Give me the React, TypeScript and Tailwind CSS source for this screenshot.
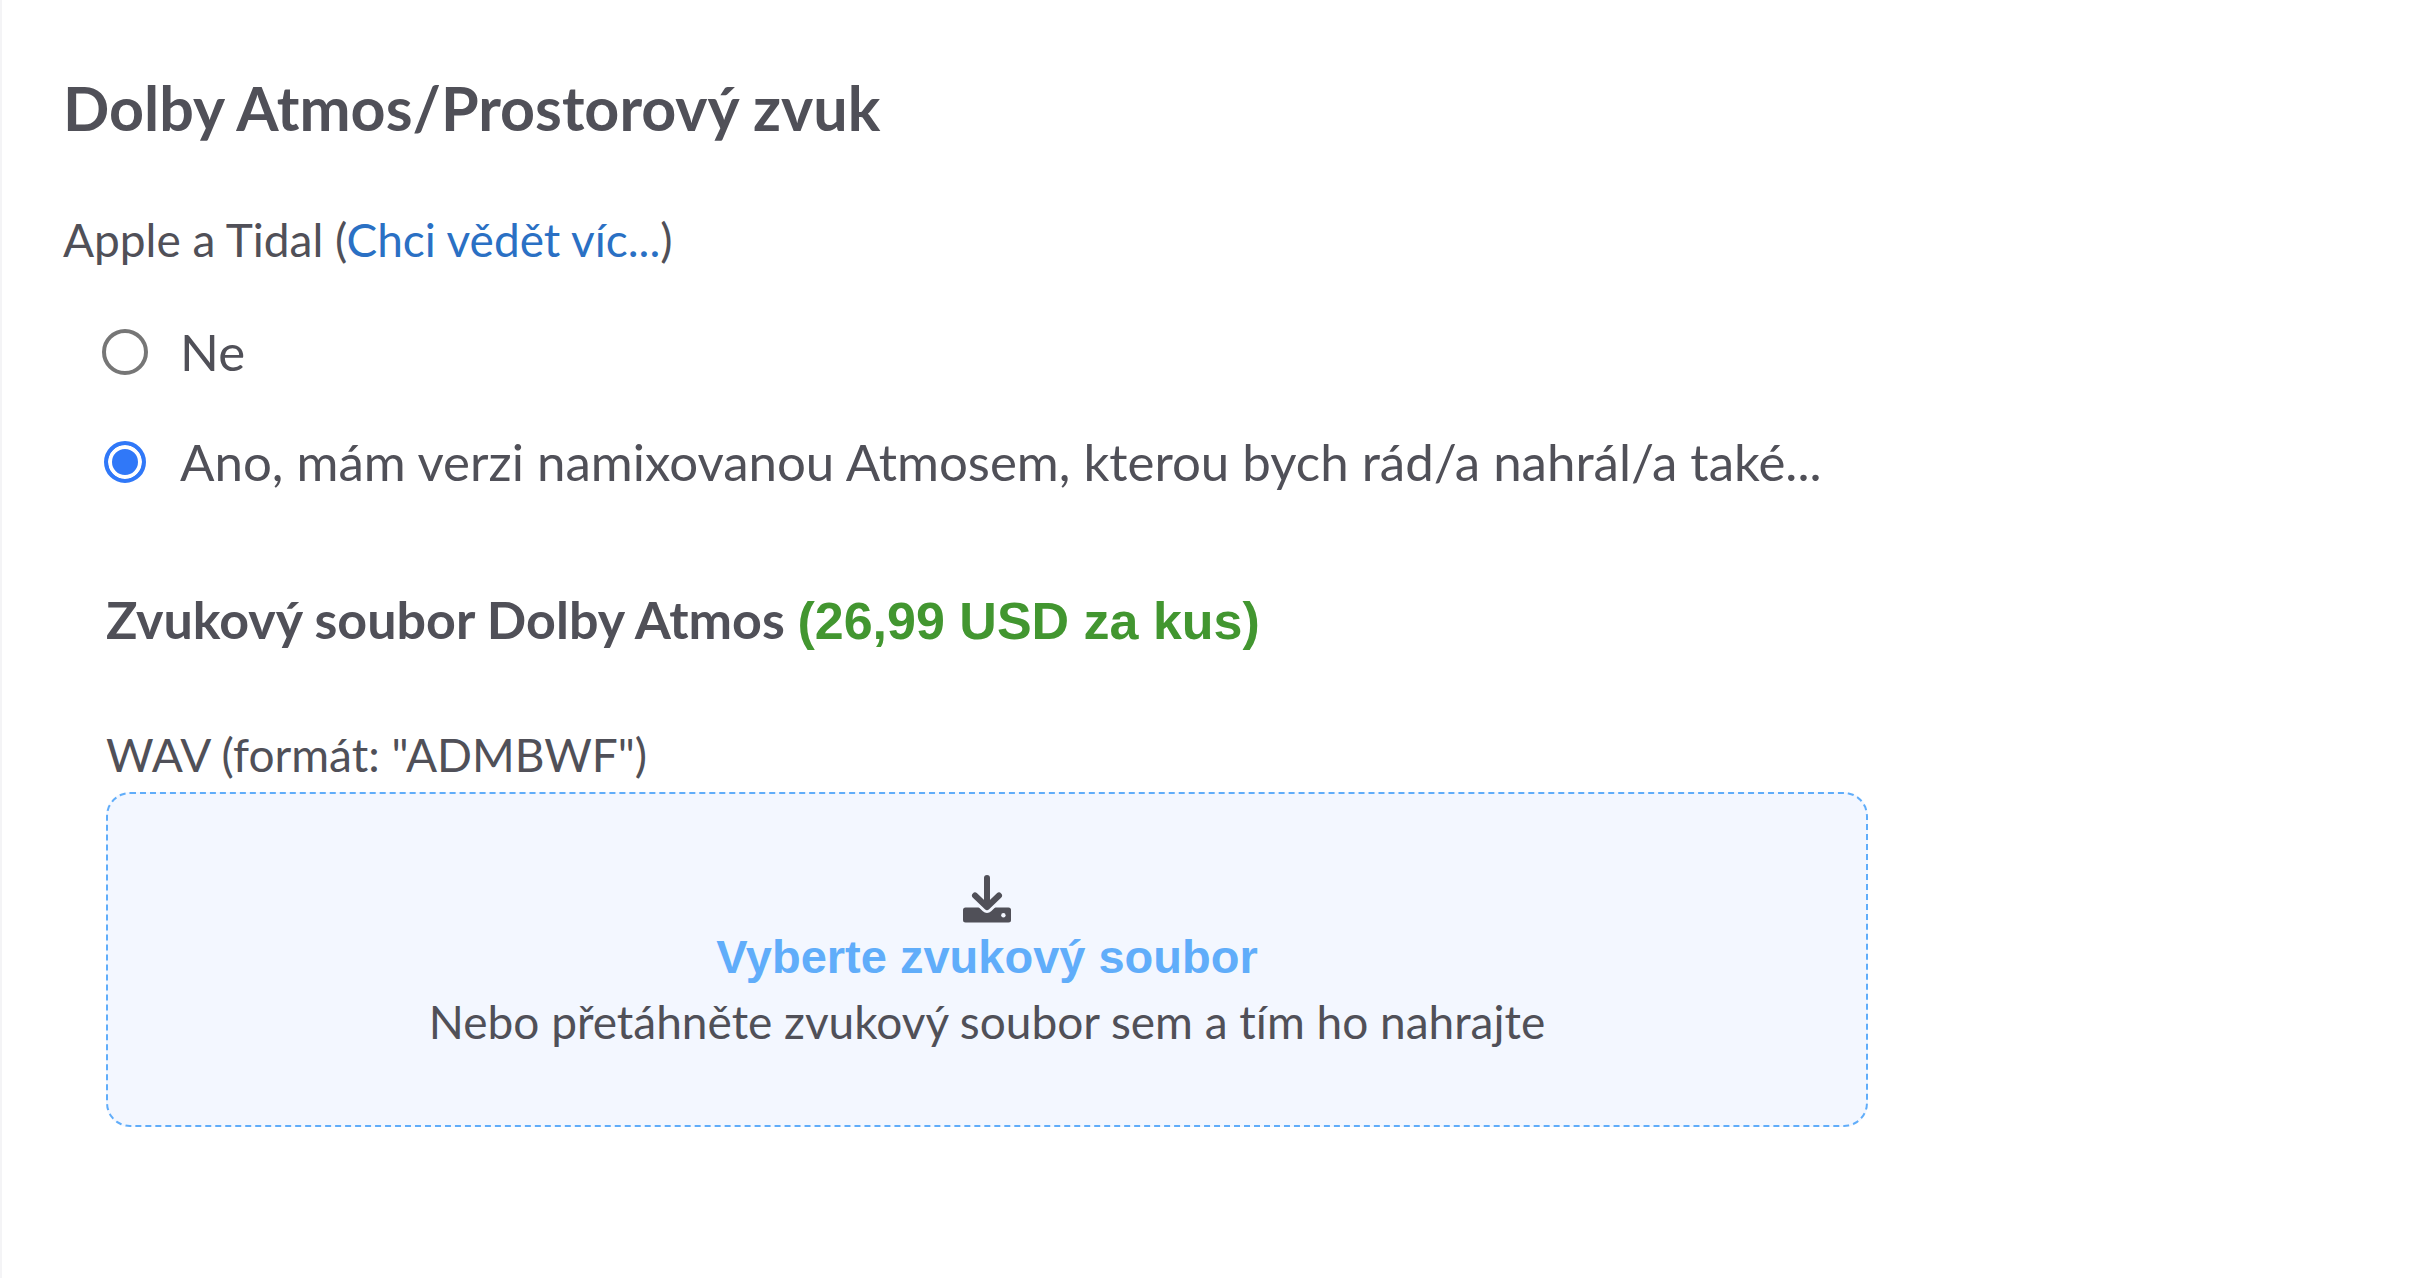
import { useState } from 'react';

const radioClass =
  'size-[46px] shrink-0 appearance-none rounded-full border-4 border-[#767676] bg-white checked:m-[2px] checked:size-[42px] checked:border-[#3078f8] checked:bg-[#3078f8] checked:shadow-[inset_0_0_0_4px_#ffffff]';

const options = [
  { value: 'ne', label: 'Ne' },
  { value: 'ano', label: 'Ano, mám verzi namixovanou Atmosem, kterou bych rád/a nahrál/a také...' },
];

function UploadIcon() {
  return (
    <svg viewBox="0 0 48 48" className="size-12" fill="none" strokeLinecap="round" strokeLinejoin="round" aria-hidden="true">
      <rect y="32.5" width="48" height="15" rx="2.5" fill="currentColor" />
      <circle cx="40.4" cy="40.2" r="2.2" fill="#f3f7ff" />
      {/* gap between the arrow head and the tray */}
      <path d="M12 20.5L24 32L36 20.5" stroke="#f3f7ff" strokeWidth="12" />
      <path d="M24 3V31M12 20.5L24 32L36 20.5" stroke="currentColor" strokeWidth="6" />
    </svg>
  );
}

export default function App() {
  const [atmos, setAtmos] = useState('ano');

  return (
    <main className="min-h-screen border-l-2 border-[#f4f4f6] bg-white px-[61px] pt-[70px] pb-16 font-[Lato,'Liberation_Sans',sans-serif] text-[#505058] [font-variant-ligatures:no-common-ligatures]">
      <h1 className="text-[61px] leading-[76px] font-bold">Dolby Atmos/Prostorový zvuk</h1>
      <p className="mt-16 text-[46px] leading-[60px]">
        Apple a Tidal (
        <a href="#vice" className="text-[#2a70c4]">Chci vědět víc...</a>)
      </p>
      <fieldset className="mt-[51px] ml-[39px] flex flex-col gap-12">
        {options.map((option) => (
          <label key={option.value} className="flex items-center gap-8 text-[51px] leading-[62px]">
            <input
              type="radio"
              name="atmos"
              value={option.value}
              checked={atmos === option.value}
              onChange={() => setAtmos(option.value)}
              className={radioClass}
            />
            {option.label}
          </label>
        ))}
      </fieldset>
      <section className="mt-[91px] ml-[43px]">
        <h2 className="text-[52px] leading-[70px] font-bold">
          Zvukový soubor Dolby Atmos{' '}
          <span className="font-['Liberation_Sans',sans-serif] text-[#429630]">(26,99 USD za kus)</span>
        </h2>
        <p className="mt-[69px] text-[46px] leading-[60px]">WAV (formát: "ADMBWF")</p>
        <button
          type="button"
          className="mt-[7px] flex w-full max-w-[1762px] flex-col items-center rounded-3xl border-2 border-dashed border-[#60adfa] bg-[#f3f7ff] pt-[81px] pb-[70px]"
        >
          <UploadIcon />
          <span className="mt-[2px] font-['Liberation_Sans',sans-serif] text-[47px] leading-[64px] font-bold text-[#60adfa]">
            Vyberte zvukový soubor
          </span>
          <span className="text-[46px] leading-[66px]">Nebo přetáhněte zvukový soubor sem a tím ho nahrajte</span>
        </button>
      </section>
    </main>
  );
}
